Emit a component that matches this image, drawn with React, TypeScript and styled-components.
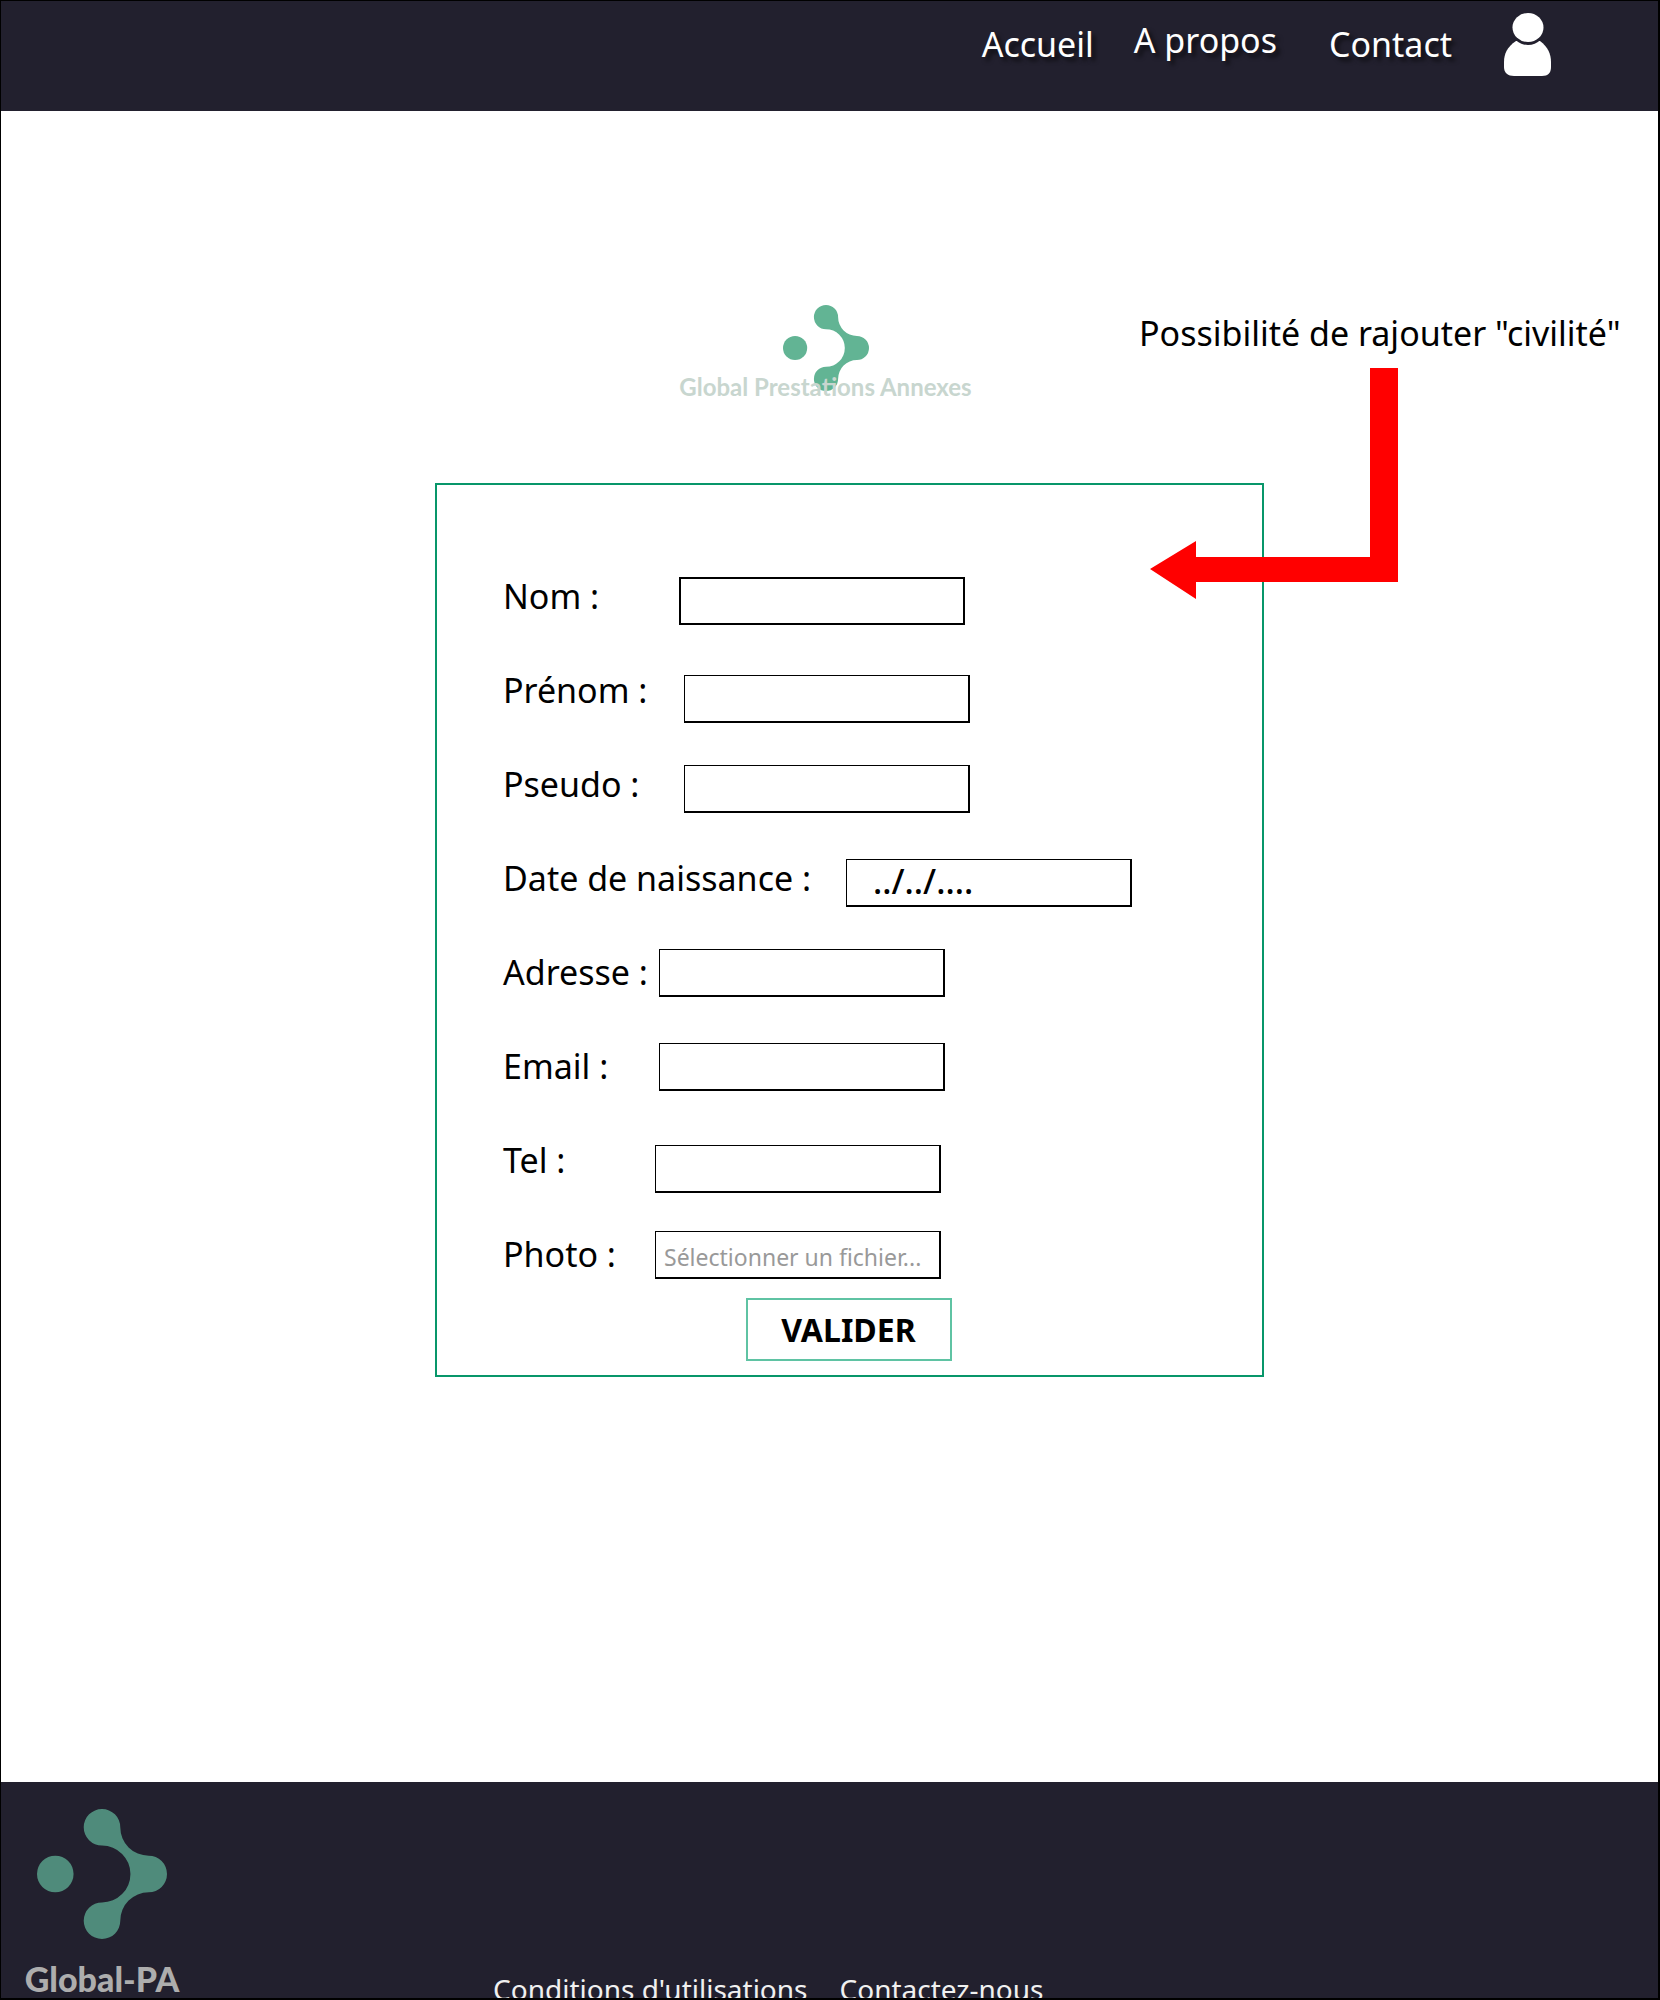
import React from "react";
import styled, { createGlobalStyle } from "styled-components";

const ink = "#22202e";
const green = "#08966a";

const GlobalStyle = createGlobalStyle`
  *, *::before, *::after { box-sizing: border-box; }
  body {
    margin: 0;
    background: #fff;
    color: #000;
    font-family: "Noto Sans", "Open Sans", sans-serif;
  }
`;

const Page = styled.div`
  display: flex;
  flex-direction: column;
  min-height: 100vh;
  border: 1px solid #000;
  border-width: 1px 2px 2px 1px;
  overflow: hidden;
`;

const Header = styled.header`
  display: flex;
  justify-content: flex-end;
  align-items: flex-start;
  gap: 52px;
  height: 110px;
  padding: 0 106px 0 24px;
  background: ${ink};
`;

const Nav = styled.nav`
  display: flex;
  gap: 52px;
  height: 52px;
  margin-top: 15px;
`;

const NavGroup = styled.div`
  display: flex;
  gap: 40px;
`;

const NavLink = styled.a<{ $raised?: boolean }>`
  align-self: ${(p) => (p.$raised ? "flex-start" : "flex-end")};
  color: #fff;
  font-size: 34px;
  line-height: 48px;
  text-decoration: none;
  text-shadow: 4px 4px 4px rgba(0, 0, 0, 0.6);
  white-space: nowrap;
`;

const Account = styled.a`
  display: block;
  margin-top: 12px;
  line-height: 0;
`;

const Main = styled.main`
  display: flex;
  flex-direction: column;
  align-items: center;
  flex: 1;
  padding-top: 194px;
`;

const Brand = styled.div`
  display: flex;
  flex-direction: column;
  align-items: center;
  padding-right: 8px;
`;

const BrandName = styled.p`
  position: relative;
  margin: -18px 0 0;
  color: #c8d6cf;
  font-family: Lato, sans-serif;
  font-size: 24px;
  font-weight: 700;
  line-height: 28px;
`;

const FormArea = styled.div`
  position: relative;
  width: 100%;
  max-width: 869px;
  margin-top: 82px;
  padding-left: 40px;
`;

const Card = styled.form`
  display: flex;
  flex-direction: column;
  gap: 38px;
  padding: 88px 24px 14px 66px;
  border: 2px solid ${green};
`;

const Row = styled.div<{ $labelWidth: number }>`
  display: grid;
  grid-template-columns: ${(p) => p.$labelWidth}px 286px;
  height: 56px;
`;

const Label = styled.label`
  font-size: 34px;
  line-height: 46px;
  white-space: nowrap;
`;

type Align = "start" | "center" | "end";

const TextBox = styled.input<{ $align: Align; $heavy?: boolean }>`
  align-self: ${(p) => p.$align};
  width: 100%;
  height: 48px;
  padding: 0 26px 4px;
  border: 1px solid #000;
  border-width: ${(p) => (p.$heavy ? "2px" : "1px 2px 2px 1px")};
  border-radius: 0;
  background: #fff;
  color: #000;
  font: 500 34px "Noto Sans", sans-serif;
  &::placeholder { color: #000; opacity: 1; }
`;

const FileBox = styled.label<{ $align: Align }>`
  align-self: ${(p) => p.$align};
  position: relative;
  height: 48px;
  padding: 0 8px;
  border: 1px solid #000;
  border-width: 1px 2px 2px 1px;
  color: #999;
  font-size: 23px;
  line-height: 50px;
  white-space: nowrap;
  cursor: pointer;
`;

const HiddenFile = styled.input`
  position: absolute;
  inset: 0;
  width: 100%;
  opacity: 0;
  cursor: pointer;
`;

const Submit = styled.button`
  align-self: center;
  width: 206px;
  height: 63px;
  margin: -27px 44px 0 0;
  padding: 0;
  border: 2px solid #5fc3a3;
  background: #fff;
  color: #000;
  font: 700 32px "Noto Sans", sans-serif;
  cursor: pointer;
`;

const Note = styled.aside`
  position: absolute;
  top: -174px;
  left: 744px;
  white-space: nowrap;
`;

const NoteText = styled.p`
  margin: 0;
  font-size: 34px;
  line-height: 48px;
`;

const Arrow = styled.svg`
  display: block;
  margin: 11px 0 0 11px;
`;

const Footer = styled.footer`
  display: flex;
  align-items: flex-start;
  height: 216px;
  padding-left: 22px;
  background: ${ink};
  overflow: hidden;
`;

const FooterBrand = styled.div`
  display: flex;
  flex-direction: column;
  align-items: center;
  width: 158px;
  padding-top: 27px;
`;

const FooterName = styled.p`
  margin: 20px 0 0;
  color: #adadad;
  font-family: Lato, sans-serif;
  font-size: 34px;
  font-weight: 900;
  line-height: 39px;
  white-space: nowrap;
`;

const FooterLinks = styled.nav`
  display: flex;
  gap: 32px;
  margin: 187px 0 0 312px;
`;

const FooterLink = styled.a`
  color: #f0f0f0;
  font-size: 28px;
  line-height: 40px;
  text-decoration: none;
  white-space: nowrap;
`;

function Logo({ size, color }: { size: number; color: string }) {
  return (
    <svg width={size} height={size} viewBox="-64 -64 128 128" fill={color} aria-hidden="true">
      <circle cx="-46" cy="0" r="18" />
      <path d="M0-28A28 28 0 0 1 0 28A18 18 0 1 0 18 46A28 28 0 0 1 46 18A18 18 0 0 0 46-18A28 28 0 0 1 18-46A18 18 0 1 0 0-28Z" />
    </svg>
  );
}

interface Field {
  id: string;
  label: string;
  labelWidth: number;
  align: Align;
  type: string;
  heavy?: boolean;
  placeholder?: string;
}

const fields: Field[] = [
  { id: "nom", label: "Nom :", labelWidth: 176, align: "center", type: "text", heavy: true },
  { id: "prenom", label: "Prénom :", labelWidth: 181, align: "end", type: "text" },
  { id: "pseudo", label: "Pseudo :", labelWidth: 181, align: "center", type: "text" },
  { id: "naissance", label: "Date de naissance :", labelWidth: 343, align: "center", type: "text", placeholder: "../../...." },
  { id: "adresse", label: "Adresse :", labelWidth: 156, align: "start", type: "text" },
  { id: "email", label: "Email :", labelWidth: 156, align: "start", type: "email" },
  { id: "tel", label: "Tel :", labelWidth: 152, align: "end", type: "tel" },
  { id: "photo", label: "Photo :", labelWidth: 152, align: "start", type: "file" },
];

export default function App() {
  return (
    <>
      <GlobalStyle />
      <Page>
        <Header>
          <Nav aria-label="Navigation principale">
            <NavGroup>
              <NavLink href="#accueil">Accueil</NavLink>
              <NavLink href="#a-propos" $raised>A propos</NavLink>
            </NavGroup>
            <NavLink href="#contact">Contact</NavLink>
          </Nav>
          <Account href="#compte" aria-label="Mon compte">
            <svg width="48" height="64" viewBox="0 0 48 64" fill="#fff" aria-hidden="true">
              <path d="M12 28C3 34 0 41 0 49v5c0 6 4 9 10 9h28c6 0 9-3 9-9v-5c0-8-3-15-11-21Z" />
              <ellipse cx="24" cy="15" rx="17.5" ry="17" fill={ink} />
              <ellipse cx="24" cy="14.5" rx="15.5" ry="14.5" />
            </svg>
          </Account>
        </Header>
        <Main>
          <Brand>
            <Logo size={86} color="#62b494" />
            <BrandName>Global Prestations Annexes</BrandName>
          </Brand>
          <FormArea>
            <Card onSubmit={(e) => e.preventDefault()}>
              {fields.map((f) => (
                <Row key={f.id} $labelWidth={f.labelWidth}>
                  <Label htmlFor={f.id}>{f.label}</Label>
                  {f.type === "file" ? (
                    <FileBox $align={f.align}>
                      Sélectionner un fichier...
                      <HiddenFile id={f.id} type="file" />
                    </FileBox>
                  ) : (
                    <TextBox
                      id={f.id}
                      type={f.type}
                      placeholder={f.placeholder}
                      $align={f.align}
                      $heavy={f.heavy}
                    />
                  )}
                </Row>
              ))}
              <Submit type="submit">VALIDER</Submit>
            </Card>
            <Note>
              <NoteText>Possibilité de rajouter "civilité"</NoteText>
              <Arrow width="248" height="232" viewBox="0 0 248 232" fill="#f00" aria-hidden="true">
                <path d="M220 0h28v214H46v17L0 201l46-28v16h174Z" />
              </Arrow>
            </Note>
          </FormArea>
        </Main>
        <Footer>
          <FooterBrand>
            <Logo size={130} color="#4f8b7b" />
            <FooterName>Global-PA</FooterName>
          </FooterBrand>
          <FooterLinks aria-label="Pied de page">
            <FooterLink href="#conditions">Conditions d'utilisations</FooterLink>
            <FooterLink href="#contactez-nous">Contactez-nous</FooterLink>
          </FooterLinks>
        </Footer>
      </Page>
    </>
  );
}
